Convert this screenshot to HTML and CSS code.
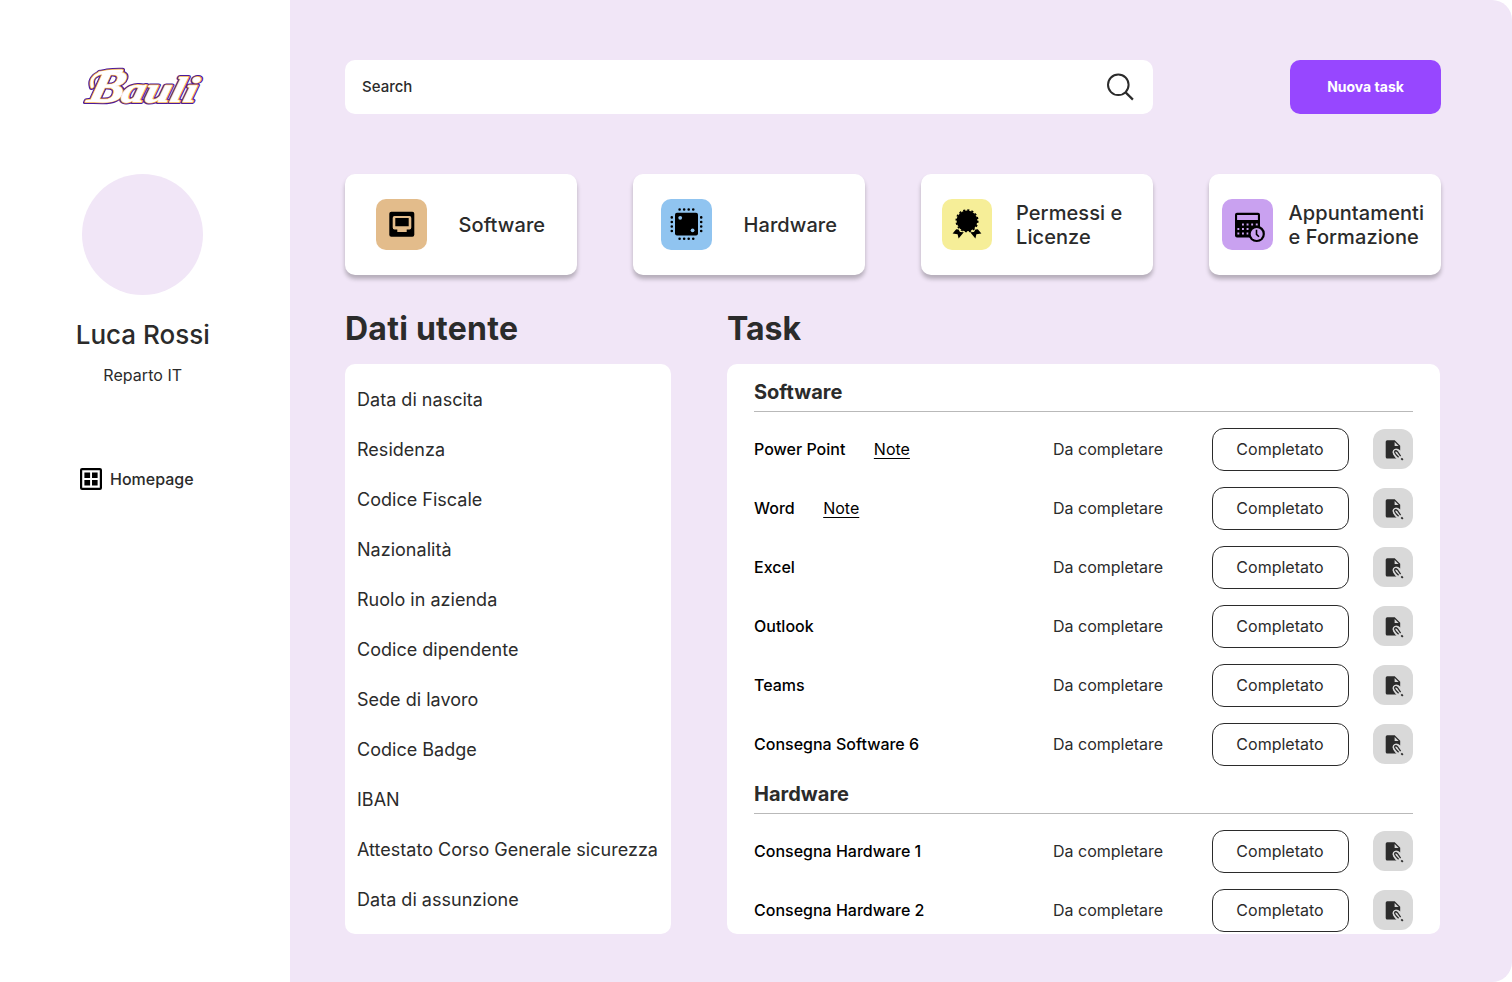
FILE: index.html
```html
<!DOCTYPE html>
<html lang="it">
<head>
<meta charset="utf-8">
<title>Bauli - Onboarding</title>
<link rel="stylesheet" href="styles.css">
</head>
<body>
<svg class="defs" width="0" height="0" aria-hidden="true">
  <symbol id="edit" viewBox="0 0 40 40">
    <path fill="#2b2b2b" d="M14.2 11.3H21.7L27.2 16.8V21.4C25 19 21.6 19.2 20 21.4C18.6 23.8 20.8 26.6 24 29.5H14.2Q12.7 29.5 12.7 28V12.8Q12.7 11.3 14.2 11.3Z"/>
    <path fill="#d9d9d9" d="M21.6 13V17H25.6Z"/>
    <path fill="#d9d9d9" d="M20 21.4Q22.4 18.8 25.4 20.6L30 27V31H25Q19 26 20 21.4Z"/>
    <path d="M21.6 22.6Q22.6 21 24.4 22.4L27.6 27.2M21.6 22.6Q21.4 24.2 25.6 28.2" fill="none" stroke="#2b2b2b" stroke-width="1.3"/>
    <path d="M28.3 29.4L29.8 30.9" stroke="#2b2b2b" stroke-width="1.9"/>
  </symbol>
</svg>
<div class="page">
  <aside class="sidebar">
    <svg class="logo" width="130" height="46" viewBox="0 0 130 46" aria-label="Bauli">
      <g class="logo-text logo-outer" transform="translate(8 37.5) skewX(-14)">
        <path d="M2.5 -15C-4 -27 8 -31 28 -30.5"/>
        <text class="cap" textLength="36" lengthAdjust="spacingAndGlyphs">B</text>
        <text class="rest" x="34" textLength="75" lengthAdjust="spacingAndGlyphs">auli</text>
      </g>
      <g class="logo-text logo-mid" transform="translate(8 37.5) skewX(-14)" aria-hidden="true">
        <path d="M2.5 -15C-4 -27 8 -31 28 -30.5"/>
        <text class="cap" textLength="36" lengthAdjust="spacingAndGlyphs">B</text>
        <text class="rest" x="34" textLength="75" lengthAdjust="spacingAndGlyphs">auli</text>
      </g>
      <g class="logo-text logo-inner" transform="translate(8 37.5) skewX(-14)" aria-hidden="true">
        <path d="M2.5 -15C-4 -27 8 -31 28 -30.5"/>
        <text class="cap" textLength="36" lengthAdjust="spacingAndGlyphs">B</text>
        <text class="rest" x="34" textLength="75" lengthAdjust="spacingAndGlyphs">auli</text>
      </g>
    </svg>
    <div class="avatar"></div>
    <div class="user-name">Luca Rossi</div>
    <div class="user-role">Reparto IT</div>
    <a class="nav-item">
      <svg width="22" height="22" viewBox="0 0 22 22"><rect x="1.1" y="1.1" width="19.8" height="19.8" rx="1" fill="none" stroke="#000" stroke-width="2.2"/><path d="M4.4 4.4h5.7v5.7H4.4zM12 4.4h5.6v5.7H12zM4.4 12h5.7v5.6H4.4zM12 12h5.6v5.6H12z"/></svg>
      <span>Homepage</span>
    </a>
  </aside>
  <main class="main">
    <header class="topbar">
      <div class="search"><span>Search</span>
        <svg width="28" height="28" viewBox="0 0 28 28" fill="none" stroke="#2b2b2b" stroke-width="2"><circle cx="12.3" cy="11.8" r="10.3"/><path d="M19.6 19.4L26.9 26.6" stroke-width="2.2"/></svg>
      </div>
      <button class="new-task">Nuova task</button>
    </header>
    <section class="cards">
      <div class="card card-software">
        <svg class="tile" viewBox="0 0 50 51"><rect x="12.8" y="12.7" width="25" height="25" rx="2"/><path fill="#e3bc8b" fill-rule="evenodd" d="M18 17H33Q34.8 17 34.8 19V28.5Q34.8 30.5 33 30.5H30.2V33H20.8V30.5H18Q16.2 30.5 16.2 28.5V19Q16.2 17 18 17ZM18.8 19V27.2H32.2V19Z"/></svg>
        <span>Software</span>
      </div>
      <div class="card card-hardware">
        <svg class="tile" viewBox="0 0 50 51"><rect x="13.5" y="13.8" width="23" height="22.8" rx="2"/><circle cx="18.7" cy="18.8" r="1.9" fill="#90c4f0"/><circle cx="31.1" cy="31.3" r="1.9" fill="#90c4f0"/><g fill="none" stroke="#000" stroke-width="2.6" stroke-linecap="round" stroke-dasharray="0 4.55"><path d="M18.1 10.5H32.1M18.1 39.8H32.1M10.3 18.4V32.4M39.7 18.4V32.4"/></g></svg>
        <span>Hardware</span>
      </div>
      <div class="card card-permits">
        <svg class="tile" viewBox="0 0 50 51"><circle cx="25" cy="21.8" r="10.4"/><circle cx="25" cy="21.8" r="10.7" fill="none" stroke="#000" stroke-width="1.7" stroke-dasharray="2.1 2.1"/><path d="M14.2 30.2L16.6 30.6L18 33L21.8 33.2L16.6 39.4L15.6 35.2L10.6 34.4ZM35.8 30.2L33.4 30.6L32 33L28.2 33.2L33.4 39.4L34.4 35.2L39.4 34.4Z"/></svg>
        <span>Permessi e<br>Licenze</span>
      </div>
      <div class="card card-events">
        <svg class="tile" viewBox="0 0 50 51"><rect x="12.5" y="13.8" width="25" height="24.8" rx="2"/><rect x="14.6" y="16" width="20.8" height="5" fill="#c9a1f0"/><g stroke="#c9a1f0" stroke-width="1.9" stroke-dasharray="1.9 2.7"><path d="M19.5 25.5H35.7M14.9 30H31.7M14.9 34.5H26.7"/></g><circle cx="34.2" cy="34.9" r="8.2"/><circle cx="34.2" cy="34.9" r="6" fill="#c9a1f0"/><path d="M34 30.8V35.3L36.5 37.8" fill="none" stroke="#000" stroke-width="1.6"/></svg>
        <span>Appuntamenti<br>e Formazione</span>
      </div>
    </section>
    <div class="content">
      <section class="user-data">
        <h2>Dati utente</h2>
        <ul class="panel data-list">
          <li>Data di nascita</li><li>Residenza</li><li>Codice Fiscale</li><li>Nazionalità</li><li>Ruolo in azienda</li><li>Codice dipendente</li><li>Sede di lavoro</li><li>Codice Badge</li><li>IBAN</li><li>Attestato Corso Generale sicurezza</li><li>Data di assunzione</li>
        </ul>
      </section>
      <section class="tasks">
        <h2>Task</h2>
        <div class="panel task-list">
          <h3>Software</h3>
          <div class="row"><div class="task"><b>Power Point</b><a>Note</a></div><span>Da completare</span><button class="done">Completato</button><button class="edit"><svg viewBox="0 0 40 40"><use href="#edit"/></svg></button></div>
          <div class="row"><div class="task"><b>Word</b><a>Note</a></div><span>Da completare</span><button class="done">Completato</button><button class="edit"><svg viewBox="0 0 40 40"><use href="#edit"/></svg></button></div>
          <div class="row"><div class="task"><b>Excel</b></div><span>Da completare</span><button class="done">Completato</button><button class="edit"><svg viewBox="0 0 40 40"><use href="#edit"/></svg></button></div>
          <div class="row"><div class="task"><b>Outlook</b></div><span>Da completare</span><button class="done">Completato</button><button class="edit"><svg viewBox="0 0 40 40"><use href="#edit"/></svg></button></div>
          <div class="row"><div class="task"><b>Teams</b></div><span>Da completare</span><button class="done">Completato</button><button class="edit"><svg viewBox="0 0 40 40"><use href="#edit"/></svg></button></div>
          <div class="row"><div class="task"><b>Consegna Software 6</b></div><span>Da completare</span><button class="done">Completato</button><button class="edit"><svg viewBox="0 0 40 40"><use href="#edit"/></svg></button></div>
          <h3>Hardware</h3>
          <div class="row"><div class="task"><b>Consegna Hardware 1</b></div><span>Da completare</span><button class="done">Completato</button><button class="edit"><svg viewBox="0 0 40 40"><use href="#edit"/></svg></button></div>
          <div class="row"><div class="task"><b>Consegna Hardware 2</b></div><span>Da completare</span><button class="done">Completato</button><button class="edit"><svg viewBox="0 0 40 40"><use href="#edit"/></svg></button></div>
        </div>
      </section>
    </div>
  </main>
</div>
</body>
</html>
```
FILE: styles.css
```css
* { box-sizing: border-box; }
body { margin: 0; background: #fff; color: #2b2b2b; font-family: Inter, sans-serif; }
.defs { display: block; height: 0; }
button { font-family: inherit; padding: 0; border: 0; color: inherit; }
.page { display: flex; width: 1512px; height: 982px; overflow: hidden; }

.sidebar { width: 290px; flex: none; padding: 64px 4.5px 0 0; display: flex; flex-direction: column; align-items: center; }
.logo { display: block; overflow: visible; }
.logo-text { font: italic bold 36px "Liberation Serif", serif; stroke-linejoin: round; stroke-linecap: round; }
.logo-text .cap { font-size: 46px; }
.logo-text path { fill: none; }
.logo-outer { fill: #4b1a9c; stroke: #4b1a9c; stroke-width: 4.2px; }
.logo-mid { fill: #f0a73c; stroke: #f0a73c; stroke-width: 2.2px; }
.logo-inner { fill: #fff; stroke: #fff; stroke-width: .7px; }
.logo-outer path { stroke-width: 6.6px; }
.logo-mid path { stroke-width: 4.4px; }
.logo-inner path { stroke-width: 2.8px; }
.avatar { width: 121px; height: 121px; margin-top: 64px; border-radius: 50%; background: #f1e6f7; }
.user-name { margin-top: 24px; font-size: 26px; line-height: 32px; font-weight: 500; }
.user-role { margin-top: 14px; font-size: 16px; line-height: 20px; letter-spacing: .05px; }
.nav-item { align-self: flex-start; margin: 83px 0 0 79.5px; display: flex; align-items: center; gap: 8.5px; font-size: 16px; line-height: 22px; font-weight: 500; }
.nav-item svg { display: block; }

.main { flex: 1; padding: 60px 71px 0 55px; background: #f1e6f7; border-radius: 0 20px 20px 0; }
.topbar { display: flex; justify-content: space-between; }
.search { width: 808px; height: 54px; padding: 0 19px 0 17px; border-radius: 10px; background: #fff; display: flex; align-items: center; justify-content: space-between; font-size: 15px; font-weight: 500; }
.search span { padding-bottom: 2px; }
.new-task { width: 151px; height: 54px; padding-bottom: 2px; border-radius: 10px; background: #9747ff; color: #fff; font-size: 14px; font-weight: 700; }

.cards { display: flex; gap: 56px; margin-top: 60px; }
.card { width: 232px; height: 101px; border-radius: 10px; background: #fff; box-shadow: 0 4px 4px rgba(0, 0, 0, .25); display: flex; align-items: center; font-size: 20px; line-height: 24px; font-weight: 450; letter-spacing: .08px; white-space: nowrap; }
.tile { flex: none; width: 51px; height: 51px; border-radius: 10px; }
.card-software { padding-left: 31px; gap: 31.5px; }
.card-software .tile { background: #e3bc8b; }
.card-hardware { padding-left: 28px; gap: 31.5px; }
.card-hardware .tile { background: #90c4f0; }
.card-permits { padding-left: 21px; gap: 24px; }
.card-permits .tile { width: 50px; background: #f6ee98; }
.card-events { padding-left: 13px; gap: 15.5px; }
.card-events .tile { background: #c9a1f0; }

.content { display: flex; gap: 56px; }
h2 { margin: 33px 0 15px; font-size: 32px; line-height: 41px; font-weight: 700; }
.user-data h2 { letter-spacing: .25px; }
.panel { height: 570px; margin: 0; border-radius: 10px; background: #fff; overflow: hidden; }
.user-data { width: 326px; }
.data-list { padding: 11px 12px; list-style: none; font-size: 18px; line-height: 50px; letter-spacing: .02px; white-space: nowrap; }
.tasks { width: 713px; }
.task-list { padding: 0 27px; }
h3 { height: 48px; margin: 0; padding-top: 16px; border-bottom: 1px solid #b9b9b9; font-size: 20px; line-height: 24px; font-weight: 700; }
.row { display: grid; grid-template-columns: 299px 159px 137px 64px; height: 43px; margin-top: 16px; align-items: center; font-size: 16px; }
.row > span, .task { padding-bottom: 2px; }
.task { display: flex; gap: 28.5px; color: #000; }
.task b { font-weight: 500; }
.task a { text-decoration: underline; text-underline-offset: 3px; }
.done { height: 43px; padding: 0 1px 2px 0; border: 1px solid #2b2b2b; border-radius: 12px; background: #fff; font-size: 16px; }
.edit { justify-self: end; width: 40px; height: 40px; margin-bottom: 1px; border-radius: 12px; background: #d9d9d9; }
.edit svg { display: block; width: 40px; height: 40px; }
```
